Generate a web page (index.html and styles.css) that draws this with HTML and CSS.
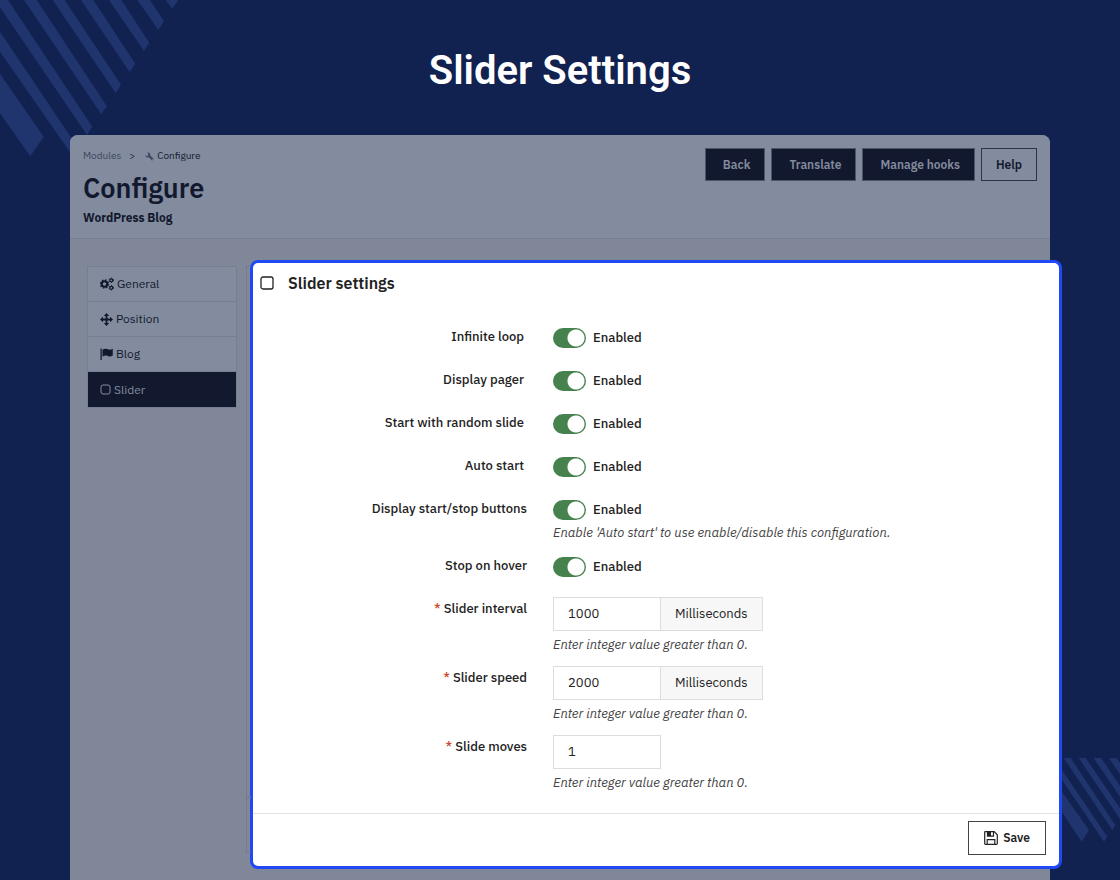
FILE: index.html
```html
<!DOCTYPE html>
<html lang="en">
<head>
    <meta charset="UTF-8">
    <meta name="viewport" content="width=device-width, initial-scale=1.0">
    <title>Slider Settings</title>
    <link rel="stylesheet" href="styles.css">
</head>
<body>

    <!-- Background stripes -->
    <svg class="stripes stripes-top" viewBox="0 0 540 480" aria-hidden="true">
        <polygon points="0,221 131,410 91,469 0,340"/>
        <polygon points="0,95 234,443 218,468 0,155"/>
        <polygon points="-15,0 24,0 277,380 261,405"/>
        <polygon points="72,0 110,0 320,318 304,343"/>
        <polygon points="158,0 194,0 363,254 347,279"/>
        <polygon points="243,0 280,0 406,191 389,216"/>
        <polygon points="327,0 364,0 448,128 432,153"/>
        <polygon points="412,0 450,0 492,64 475,90"/>
        <polygon points="497,0 535,0 517,26"/>
    </svg>
    <svg class="stripes stripes-bottom" viewBox="0 0 174 252" aria-hidden="true">
        <polygon points="0,101 81,216 59,251 0,163"/>
        <polygon points="0,36 136,236 126,251 0,66"/>
        <polygon points="5,0 26,0 160,202 151,216"/>
        <polygon points="50,0 71,0 174,151 174,183"/>
        <polygon points="95,0 117,0 174,84 174,116"/>
        <polygon points="141,0 164,0 174,15 174,49"/>
    </svg>

    <h1 class="page-title">Slider Settings</h1>

    <div class="window">
        <header class="window-header">
            <div>
                <nav class="breadcrumb">
                    <a href="#">Modules</a>
                    <span class="separator">&gt;</span>
                    <svg class="wrench" viewBox="0 0 16 16" aria-hidden="true">
                        <path fill-rule="evenodd" d="M4 1a4.500 4.500 0 0 1 5.500 5.800l6 5.200-3 3.500-5.500-6A4.500 4.500 0 0 1 .8 5.500L4 7.500l2.500-2.800zM12.800 12.200a.9.9 0 1 0 .1 1.800.9.900 0 0 0-.1-1.800z"/>
                    </svg>
                    <span>Configure</span>
                </nav>
                <h2 class="module-title">Configure</h2>
                <p class="module-name">WordPress Blog</p>
            </div>
            <div class="toolbar">
                <button type="button" class="btn btn-dark">Back</button>
                <button type="button" class="btn btn-dark">Translate</button>
                <button type="button" class="btn btn-dark">Manage hooks</button>
                <button type="button" class="btn">Help</button>
            </div>
        </header>

        <div class="window-body">
            <nav class="sidebar">
                <a href="#general">
                    <svg width="14" height="14" viewBox="0 0 28 28" fill="none" stroke="currentColor" aria-hidden="true">
                        <circle cx="9" cy="14" r="5.500" stroke-width="4"/>
                        <circle cx="9" cy="14" r="8" stroke-width="3" stroke-dasharray="3 3.280"/>
                        <circle cx="22.500" cy="6.500" r="3" stroke-width="2.500"/>
                        <circle cx="22.500" cy="6.500" r="4.500" stroke-width="2" stroke-dasharray="2 2.710"/>
                        <circle cx="22.500" cy="21.500" r="3" stroke-width="2.500"/>
                        <circle cx="22.500" cy="21.500" r="4.500" stroke-width="2" stroke-dasharray="2 2.710"/>
                    </svg>
                    General
                </a>
                <a href="#position">
                    <svg width="13" height="13" viewBox="0 0 24 24" fill="currentColor" aria-hidden="true">
                        <path d="M12 0l5 5.500h-3.300v4.800h4.800V7L24 12l-5.500 5v-3.300h-4.800v4.800H17L12 24l-5-5.500h3.300v-4.800H5.500V17L0 12l5.500-5v3.300h4.800V5.500H7z"/>
                    </svg>
                    Position
                </a>
                <a href="#blog">
                    <svg width="13" height="12" viewBox="0 0 26 24" fill="currentColor" aria-hidden="true">
                        <path d="M1 1h2.500v23H1zM5 3.500C10 .5 13 1 16 2.500c3.500 1.500 6 .8 9.500-1V15c-4 2.300-7 2.300-10 .8-3.500-1.500-6.500-.8-10.500 1.400z"/>
                    </svg>
                    Blog
                </a>
                <a href="#slider" class="active" aria-current="page">
                    <svg width="11" height="11" viewBox="0 0 11 11" fill="none" stroke="currentColor" aria-hidden="true">
                        <rect x="1" y="1" width="9" height="9" rx="2"/>
                    </svg>
                    Slider
                </a>
            </nav>

            <!-- Highlighted settings panel -->
            <form class="panel">
                <h3 class="panel-title">
                    <svg width="14" height="14" viewBox="0 0 14 14" fill="none" stroke="currentColor" stroke-width="1.300" aria-hidden="true">
                        <rect x="1" y="1" width="12" height="12" rx="2"/>
                    </svg>
                    Slider settings
                </h3>

                <div class="rows">
                    <div class="row">
                        <label class="row-label" for="loop">Infinite loop&nbsp;</label>
                        <div class="row-field">
                            <div class="toggle"><input type="checkbox" role="switch" id="loop" checked> Enabled</div>
                        </div>
                    </div>
                    <div class="row">
                        <label class="row-label" for="pager">Display pager&nbsp;</label>
                        <div class="row-field">
                            <div class="toggle"><input type="checkbox" role="switch" id="pager" checked> Enabled</div>
                        </div>
                    </div>
                    <div class="row">
                        <label class="row-label" for="random">Start with random slide&nbsp;</label>
                        <div class="row-field">
                            <div class="toggle"><input type="checkbox" role="switch" id="random" checked> Enabled</div>
                        </div>
                    </div>
                    <div class="row">
                        <label class="row-label" for="auto">Auto start&nbsp;</label>
                        <div class="row-field">
                            <div class="toggle"><input type="checkbox" role="switch" id="auto" checked> Enabled</div>
                        </div>
                    </div>
                    <div class="row">
                        <label class="row-label" for="buttons">Display start/stop buttons</label>
                        <div class="row-field">
                            <div class="toggle"><input type="checkbox" role="switch" id="buttons" checked> Enabled</div>
                            <p class="help">Enable 'Auto start' to use enable/disable this configuration.</p>
                        </div>
                    </div>
                    <div class="row">
                        <label class="row-label" for="hover">Stop on hover</label>
                        <div class="row-field">
                            <div class="toggle"><input type="checkbox" role="switch" id="hover" checked> Enabled</div>
                        </div>
                    </div>
                    <div class="row">
                        <label class="row-label" for="interval"><span class="required">*</span> Slider interval</label>
                        <div class="row-field">
                            <div class="input-group">
                                <input type="text" id="interval" value="1000">
                                <span class="unit">Milliseconds</span>
                            </div>
                            <p class="help">Enter integer value greater than 0.</p>
                        </div>
                    </div>
                    <div class="row">
                        <label class="row-label" for="speed"><span class="required">*</span> Slider speed</label>
                        <div class="row-field">
                            <div class="input-group">
                                <input type="text" id="speed" value="2000">
                                <span class="unit">Milliseconds</span>
                            </div>
                            <p class="help">Enter integer value greater than 0.</p>
                        </div>
                    </div>
                    <div class="row">
                        <label class="row-label" for="moves"><span class="required">*</span> Slide moves</label>
                        <div class="row-field">
                            <div class="input-group">
                                <input type="text" id="moves" value="1">
                            </div>
                            <p class="help">Enter integer value greater than 0.</p>
                        </div>
                    </div>
                </div>

                <footer class="panel-footer">
                    <button type="submit" class="btn btn-save">
                        <svg width="14" height="14" viewBox="0 0 14 14" fill="none" stroke="currentColor" stroke-width="1.200" aria-hidden="true">
                            <path d="M1.200.7h9l3.100 3.100v8.700a.8.800 0 0 1-.8.800H1.500a.8.800 0 0 1-.8-.8V1.200a.5.500 0 0 1 .5-.5z"/>
                            <path d="M3.200 13V8.600h7.600V13M3.500 1v4.200h6V1"/>
                            <path d="M4 1h3v4H4z" fill="currentColor" stroke="none"/>
                        </svg>
                        Save
                    </button>
                </footer>
            </form>
        </div>
    </div>

</body>
</html>
```
FILE: styles.css
```css
/* --- General Styles --- */
* {
    box-sizing: border-box;
}

body {
    position: relative;
    display: flex;
    flex-direction: column;
    min-height: 100vh;
    margin: 0;
    background-color: #112150;
    color: #222;
    font-family: "IBM Plex Sans", Roboto, sans-serif;
    font-size: 13px;
    line-height: 20px;
}

h1, h2, h3, p {
    margin: 0;
}

a {
    color: inherit;
    text-decoration: none;
}

button, input {
    font: inherit;
    color: inherit;
}

/* --- Background --- */
.stripes {
    position: absolute;
    fill: #20356e;
}

.stripes-top {
    top: 0;
    left: 0;
    width: 180px;
    height: 160px;
}

.stripes-bottom {
    right: 0;
    bottom: 38px;
    width: 58px;
    height: 84px;
}

.page-title {
    padding: 47px 20px 40px;
    color: #fff;
    font-family: Roboto, sans-serif;
    font-size: 40px;
    font-weight: 600;
    line-height: 48px;
    text-align: center;
}

/* --- Dimmed window --- */
.window {
    position: relative;
    flex: 1;
    margin: 0 70px;
    border-radius: 8px 8px 0 0;
    background-color: #7f8799;
    color: #12192e;
}

.window-header {
    display: flex;
    justify-content: space-between;
    align-items: flex-start;
    padding: 13px 13px 10px;
    border-bottom: 1px solid #767e92;
    border-radius: 8px 8px 0 0;
    background-color: #838b9e;
}

.breadcrumb {
    display: flex;
    align-items: center;
    font-size: 10px;
    line-height: 16px;
}

.breadcrumb a {
    color: #3c465e;
}

.separator {
    margin: 0 10px 0 8px;
}

.wrench {
    width: 9px;
    height: 9px;
    margin-right: 3px;
    fill: #3c465e;
}

.module-title {
    margin-top: 6px;
    font-size: 27px;
    font-weight: 600;
    line-height: 36px;
}

.module-name {
    margin-top: 2px;
    font-size: 12px;
    font-weight: 700;
}

.toolbar {
    display: flex;
    gap: 6px;
}

.btn {
    height: 33px;
    padding: 0 14px;
    border: 1px solid #2c3448;
    background: none;
    font-size: 12px;
    font-weight: 600;
    cursor: pointer;
}

.btn-dark {
    padding: 0 14px 0 17px;
    border-color: #4b5469;
    background-color: #12192e;
    color: #838b9e;
}

.window-body {
    display: flex;
    align-items: flex-start;
    gap: 13px;
    padding: 21px 0 11px 17px;
}

/* --- Sidebar --- */
.sidebar {
    flex: none;
    width: 150px;
    margin-top: 6px;
    border: 1px solid #767e92;
    background-color: #838b9e;
    font-size: 12px;
}

.sidebar a {
    display: flex;
    align-items: center;
    gap: 3px;
    height: 35px;
    padding-left: 12px;
    border-bottom: 1px solid #767e92;
}

.sidebar a:last-child {
    border-bottom: 0;
}

.sidebar .active {
    background-color: #12192e;
    color: #838b9e;
}

/* --- Settings panel --- */
.panel {
    position: relative;
    flex: 1;
    margin-right: -12px;
    border: 3px solid #2049f5;
    border-radius: 8px;
    background-color: #fff;
    color: #222;
}

/* edge of the dimmed panel that shows beside the highlighted one */
.panel::before,
.panel::after {
    content: "";
    position: absolute;
    left: -7px;
    width: 4px;
    border: 1px solid #737b8f;
    border-right: 0;
}

.panel::before {
    top: 3px;
    bottom: 67px;
}

.panel::after {
    height: 55px;
    bottom: 13px;
}

.panel-title {
    display: flex;
    align-items: center;
    gap: 14px;
    padding: 8px 7px;
    font-size: 16px;
    font-weight: 600;
    line-height: 24px;
}

.rows {
    padding: 19px 0 12px;
}

.row {
    display: grid;
    grid-template-columns: 34% 1fr;
    column-gap: 26px;
    min-height: 35px;
    margin-bottom: 8px;
}

.row-label {
    font-weight: 500;
    line-height: 30px;
    text-align: right;
}

.required {
    color: #c9472b;
}

.toggle {
    display: flex;
    align-items: center;
    gap: 7px;
    padding-top: 6px;
    font-weight: 500;
}

.toggle input {
    appearance: none;
    width: 33px;
    height: 20px;
    margin: 0;
    border-radius: 10px;
    background: radial-gradient(circle at 23px 10px, #fff 8px, #46824d 9px);
}

.input-group {
    display: flex;
    height: 37px;
    margin-bottom: 4px;
    padding-top: 3px;
}

.input-group input {
    width: 108px;
    padding: 0 14px;
    border: 1px solid #ddd;
    background-color: #fff;
}

.unit {
    margin-left: -1px;
    padding: 0 14px;
    border: 1px solid #ddd;
    background-color: #f7f7f7;
    line-height: 32px;
}

.help {
    margin-top: 3px;
    color: #444;
    font-style: italic;
}

.panel-footer {
    display: flex;
    justify-content: flex-end;
    padding: 7px 13px 11px;
    border-top: 1px solid #e3e3e3;
}

.btn-save {
    display: flex;
    align-items: center;
    gap: 5px;
    height: 34px;
    padding: 0 15px;
    border-color: #444;
}
```
